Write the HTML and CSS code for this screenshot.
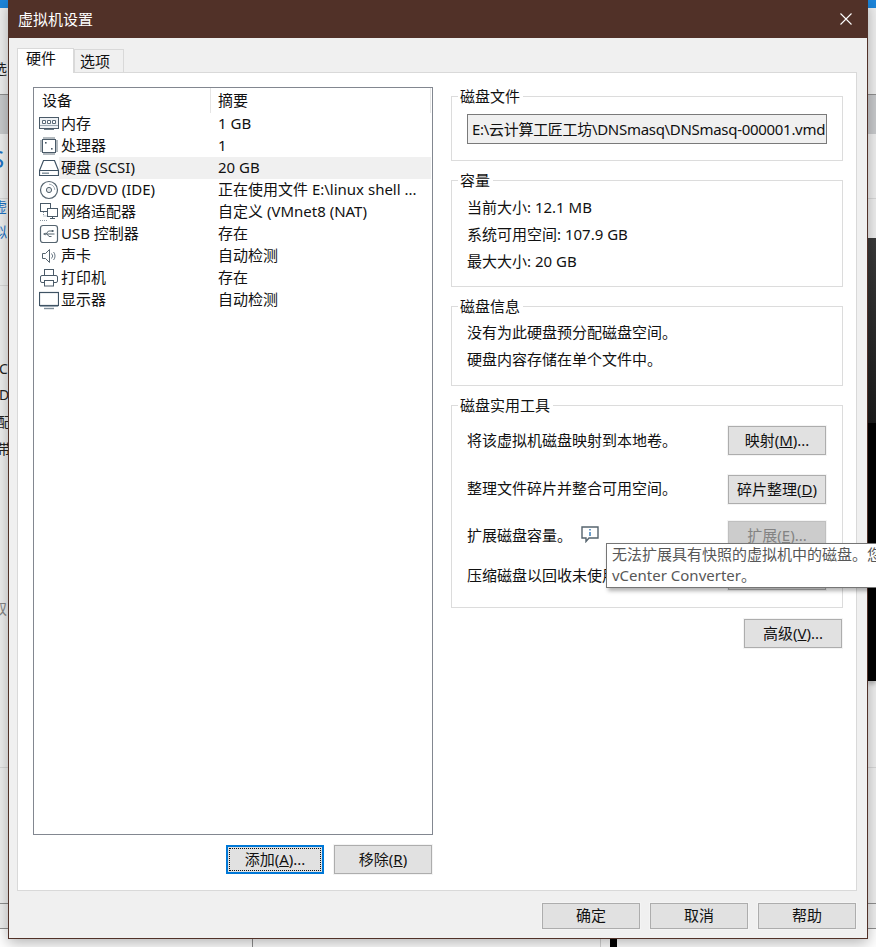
FILE: index.html
```html
<!DOCTYPE html>
<html lang="zh-CN">
<head>
<meta charset="utf-8">
<title>虚拟机设置</title>
<link rel="stylesheet" href="styles.css">
</head>
<body>
<div class="desktop">
  <div class="bg-bar bg-blue"></div>
  <div class="bg-bar bg-gray"></div>
  <div class="bg-dark"></div>
  <div class="bg-black"></div>
  <div class="bg-line l1"></div>
  <div class="bg-line l2"></div>
  <div class="bg-line l3"></div>
  <div class="bg-line l4"></div>
  <div class="bg-line l6"></div>
  <div class="bg-line l5"></div>
  <div class="bg-v v1"></div>
  <div class="bg-v v2"></div>
  <div class="bg-v v3"></div>
  <span class="bg-text t1">选</span>
  <span class="bg-text t2">S</span>
  <span class="bg-text t3">虚</span>
  <span class="bg-text t4">拟</span>
  <span class="bg-text t5">C</span>
  <span class="bg-text t6">D</span>
  <span class="bg-text t7">配</span>
  <span class="bg-text t8">带</span>
  <span class="bg-text t9">双</span>
</div>

<div class="dialog">
  <header class="titlebar">
    <span class="title">虚拟机设置</span>
    <svg class="close" width="12" height="12" viewBox="0 0 12 12"><path d="M0.5 0.5L11.5 11.5M11.5 0.5L0.5 11.5" stroke="#fff" stroke-width="1.1" fill="none"/></svg>
  </header>

  <div class="tabs">
    <div class="tab active">硬件</div>
    <div class="tab">选项</div>
  </div>

  <main class="panel">
    <section class="left">
      <div class="list">
        <div class="list-head">
          <div class="head-cell">设备</div>
          <div class="head-cell second">摘要</div>
        </div>
        <div class="row">
          <svg class="icon" viewBox="0 0 20 20"><rect x="0.5" y="3.5" width="19" height="11" fill="#eef1f4" stroke="#4a5a68"/><path d="M3.5 6.5h3v3h-3zM8.5 6.5h3v3h-3zM13.5 6.5h3v3h-3z" fill="#fff" stroke="#5a6a78"/><path d="M1 11.5h18" stroke="#9aa7b2"/><path d="M5 15.5h10" stroke="#6b7a86"/></svg>
          <div class="name">内存</div><div class="value">1 GB</div>
        </div>
        <div class="row">
          <svg class="icon" viewBox="0 0 20 20"><rect x="3.5" y="3.5" width="13" height="13" fill="#fff" stroke="#4a5a68"/><path d="M5 1v2M7 1v2M9 1v2M11 1v2M13 1v2M15 1v2M5 17v2M7 17v2M9 17v2M11 17v2M13 17v2M15 17v2M1 5h2M1 7h2M1 9h2M1 11h2M1 13h2M1 15h2M17 5h2M17 7h2M17 9h2M17 11h2M17 13h2M17 15h2" stroke="#66757f"/><rect x="6" y="6" width="1.6" height="1.6" fill="#4a5a68"/><rect x="12" y="12" width="1.6" height="1.6" fill="#4a5a68"/></svg>
          <div class="name">处理器</div><div class="value">1</div>
        </div>
        <div class="row selected">
          <svg class="icon" viewBox="0 0 20 20"><path d="M4.5 2.5h11L19.5 12.5v5h-19v-5z" fill="#fff" stroke="#3f5364" stroke-width="1.2"/><path d="M0.5 12.5h19" stroke="#3f5364"/><rect x="3" y="14.5" width="7" height="1.4" fill="#7f8e9a"/></svg>
          <div class="name">硬盘 (SCSI)</div><div class="value">20 GB</div>
        </div>
        <div class="row">
          <svg class="icon" viewBox="0 0 20 20"><circle cx="10" cy="10" r="8.5" fill="#fff" stroke="#55646f" stroke-width="1.2"/><circle cx="10" cy="10" r="2.6" fill="#e3e7ea" stroke="#55646f"/><path d="M10 4.2a5.8 5.8 0 0 1 5.8 5.8" stroke="#a8b3bb" fill="none"/></svg>
          <div class="name">CD/DVD (IDE)</div><div class="value">正在使用文件 E:\linux shell ...</div>
        </div>
        <div class="row">
          <svg class="icon" viewBox="0 0 20 20"><rect x="1.5" y="1.5" width="10" height="8" fill="#fff" stroke="#4a5a68"/><rect x="8.5" y="6.5" width="10" height="8" fill="#fff" stroke="#4a5a68"/><path d="M11 16.5h5M13.5 14.5v2" stroke="#4a5a68"/><path d="M4.5 10v4h4M1 18.5h8" stroke="#8a97a1" stroke-dasharray="1 1" fill="none"/></svg>
          <div class="name">网络适配器</div><div class="value">自定义 (VMnet8 (NAT)</div>
        </div>
        <div class="row">
          <svg class="icon" viewBox="0 0 20 20"><rect x="1.5" y="1.5" width="17" height="17" rx="2.5" fill="#fff" stroke="#55646f" stroke-width="1.2"/><path d="M4.5 10h11M7 10l2.5-3h3M8 10l2 2.5h2.5" stroke="#55646f" fill="none"/><path d="M4.5 10l2-1.5v3z" fill="#55646f"/><rect x="12.5" y="6" width="2" height="2" fill="#55646f"/></svg>
          <div class="name">USB 控制器</div><div class="value">存在</div>
        </div>
        <div class="row">
          <svg class="icon" viewBox="0 0 20 20"><path d="M3.5 7.5h3l4-4v13l-4-4h-3z" fill="#fff" stroke="#55646f"/><path d="M12.5 7.5a3.5 3.5 0 0 1 0 5M14.5 6a6 6 0 0 1 0 8" stroke="#6b7a86" fill="none"/></svg>
          <div class="name">声卡</div><div class="value">自动检测</div>
        </div>
        <div class="row">
          <svg class="icon" viewBox="0 0 20 20"><rect x="5.5" y="1.5" width="9" height="6" fill="#fff" stroke="#4a5a68"/><rect x="1.5" y="7.5" width="17" height="7" rx="1.5" fill="#fff" stroke="#4a5a68"/><rect x="5.5" y="12.5" width="9" height="5.5" fill="#fff" stroke="#4a5a68"/></svg>
          <div class="name">打印机</div><div class="value">存在</div>
        </div>
        <div class="row">
          <svg class="icon" viewBox="0 0 20 20"><rect x="0.5" y="2.5" width="19" height="13" fill="#fff" stroke="#3f5364" stroke-width="1.2"/><path d="M1 16.5h18" stroke="#9aa7b2"/><path d="M5 18.5h10" stroke="#7f8e9a" stroke-width="1.4"/></svg>
          <div class="name">显示器</div><div class="value">自动检测</div>
        </div>
      </div>
      <div class="list-actions">
        <button class="btn default"><span class="focus">添加(<u>A</u>)...</span></button>
        <button class="btn">移除(<u>R</u>)</button>
      </div>
    </section>

    <section class="right">
      <div class="group g-file">
        <div class="legend">磁盘文件</div>
        <div class="file-input">E:\云计算工匠工坊\DNSmasq\DNSmasq-000001.vmd</div>
      </div>
      <div class="group g-cap">
        <div class="legend">容量</div>
        <div class="line">当前大小: 12.1 MB</div>
        <div class="line">系统可用空间: 107.9 GB</div>
        <div class="line">最大大小: 20 GB</div>
      </div>
      <div class="group g-info">
        <div class="legend">磁盘信息</div>
        <div class="line">没有为此硬盘预分配磁盘空间。</div>
        <div class="line">硬盘内容存储在单个文件中。</div>
      </div>
      <div class="group g-tools">
        <div class="legend">磁盘实用工具</div>
        <div class="tools">
          <div class="tool"><span>将该虚拟机磁盘映射到本地卷。</span><button class="btn">映射(<u>M</u>)...</button></div>
          <div class="tool raised"><span>整理文件碎片并整合可用空间。</span><button class="btn">碎片整理(<u>D</u>)</button></div>
          <div class="tool raised"><span class="with-info">扩展磁盘容量。<svg class="info" width="18" height="17" viewBox="0 0 18 17"><path d="M1 1h16v11H8l-3 3.5V12H1z" fill="#fff" stroke="#56646e" stroke-width="1.4"/><path d="M9 3v1.6M9 6v4" stroke="#3d7fb8" stroke-width="1.5"/></svg></span>
            <button class="btn disabled">扩展(<u>E</u>)...</button></div>
          <div class="tool"><span>压缩磁盘以回收未使用的空间。</span><button class="btn">压缩(<u>C</u>)</button></div>
        </div>
      </div>
      <div class="advanced"><button class="btn">高级(<u>V</u>)...</button></div>
    </section>
  </main>

  <footer class="footer">
    <button class="btn">确定</button>
    <button class="btn">取消</button>
    <button class="btn">帮助</button>
  </footer>
</div>

<div class="tooltip">
  <div>无法扩展具有快照的虚拟机中的磁盘。您可以使用 VMware</div>
  <div>vCenter Converter。</div>
</div>
</body>
</html>
```
FILE: styles.css
```css
* { box-sizing: border-box; }
html, body { margin: 0; padding: 0; width: 876px; height: 947px; overflow: hidden; }
body {
  position: relative;
  background: #fff;
  font-family: "Noto Sans", "Noto Sans CJK SC", sans-serif;
  font-size: 15px;
  color: #111;
}
.desktop { position: absolute; inset: 0; overflow: hidden; }
.bg-bar { position: absolute; left: 0; right: 0; }
.bg-blue { top: 0; height: 8px; background: #1c86dc; }
.bg-gray { top: 8px; height: 920px; background: #f0f0f0; }
.bg-dark { position: absolute; right: 0; left: 868px; top: 238px; height: 185px; background: linear-gradient(#3a3a3a, #1c1c1c); z-index: 1; }
.bg-black { position: absolute; right: 0; left: 868px; top: 423px; height: 258px; background: #000; box-shadow: 0 3px 4px rgba(0,0,0,.25); z-index: 1; }
.bg-line { position: absolute; left: 0; right: 0; height: 1px; background: #b9b9b9; }
.l1 { top: 94px; height: 40px; background: #c9cbcd; border-top: 1px solid #8f8f8f; }
.l2 { top: 198px; background: #d9d9d9; }
.l3 { top: 285px; background: #d9d9d9; }
.l4 { top: 767px; background: #d9d9d9; }
.l6 { top: 903px; background: #8f8f8f; }
.l5 { top: 928px; background: #8f8f8f; }
.bg-v { position: absolute; top: 938px; bottom: 0; width: 1px; background: #8f8f8f; }
.v1 { left: 252px; }
.v2 { left: 600px; background: #d5d5d5; }
.v3 { left: 610px; width: 7px; background: #000; }
.bg-text { position: absolute; left: -7px; width: 15px; line-height: 20px; font-size: 14px; color: #222; }
.t1 { top: 59px; }
.t2 { top: 146px; left: -9px; font-size: 24px; line-height: 26px; color: #1e72c4; }
.t3 { top: 197px; color: #1e72c4; }
.t4 { top: 222px; color: #1e72c4; }
.t5 { top: 359px; left: -1px; }
.t6 { top: 385px; left: -1px; }
.t7 { top: 412px; left: -3px; }
.t8 { top: 439px; left: -3px; }
.t9 { top: 599px; color: #888; }

.dialog {
  position: absolute;
  left: 8px;
  top: 0;
  width: 860px;
  height: 939px;
  display: flex;
  flex-direction: column;
  background: #f0f0f0;
  border: 1px solid #513128;
  border-top: 0;
  box-shadow: 0 4px 14px rgba(0,0,0,.3);
  z-index: 2;
}
.titlebar {
  flex: none;
  height: 38px;
  background: #513128;
  color: #fff;
  display: flex;
  align-items: center;
  justify-content: space-between;
  padding: 0 15px 1px 9px;
}
.tabs { flex: none; display: flex; align-items: flex-end; height: 34px; padding-left: 8px; }
.tab {
  width: 50px;
  height: 23px;
  line-height: 22px;
  padding-left: 5px;
  background: #f0f0f0;
  border: 1px solid #d9d9d9;
  border-bottom: 0;
}
.tab.active {
  width: 57px;
  height: 25px;
  line-height: 19px;
  padding-left: 8px;
  background: #fff;
  margin-bottom: -1px;
  position: relative;
  z-index: 1;
}
.panel {
  flex: none;
  width: 840px;
  height: 819px;
  margin-left: 8px;
  background: #fff;
  border: 1px solid #d9d9d9;
  padding: 14px 13px 0 15px;
  display: flex;
  justify-content: space-between;
}
.left { width: 400px; }
.list {
  height: 748px;
  border: 1px solid #828790;
  background: #fff;
}
.list-head { display: grid; grid-template-columns: 177px 1fr; height: 25px; line-height: 25px; }
.head-cell { padding-left: 8px; border-right: 1px solid #e5e5e5; }
.head-cell.second { padding-left: 7px; margin-right: 1px; }
.row {
  display: grid;
  grid-template-columns: 25px 152px 1fr;
  height: 22px;
  line-height: 20px;
  margin-right: 1px;
  white-space: nowrap;
}
.icon { width: 20px; height: 20px; margin: 1px 0 0 5px; }
.name { padding-left: 2px; }
.value { padding-left: 7px; overflow: hidden; }
.row.selected .name, .row.selected .value { background: #f0f0f0; }
.list-actions { display: flex; justify-content: flex-end; gap: 10px; margin-top: 10px; padding-right: 1px; }

.btn {
  width: 98px;
  height: 29px;
  padding: 0 0 2px;
  background: #e1e1e1;
  border: 1px solid #adadad;
  font: inherit;
  line-height: 24px;
  color: #111;
  outline: 1px solid #f4f4f4;
  white-space: nowrap;
}
.btn.default { border: 2px solid #0078d7; padding: 1px; outline: 0; }
.focus { display: flex; align-items: center; justify-content: center; height: 100%; border: 1px dotted #111; padding-bottom: 2px; }
.btn.disabled { background: #ccc; border-color: #bfbfbf; color: #838383; }

.right { width: 392px; padding-top: 9px; }
.group { border: 1px solid #dcdcdc; padding: 0 0 0 15px; margin-bottom: 19px; }
.legend {
  width: fit-content;
  height: 20px;
  line-height: 20px;
  margin: -11px 0 0 -9px;
  padding: 0 3px 0 2px;
  background: #fff;
}
.g-file { height: 65px; }
.g-cap { height: 107px; }
.g-info { height: 80px; }
.g-tools { height: 203px; margin-bottom: 11px; }
.file-input {
  width: 360px;
  height: 30px;
  margin-top: 8px;
  line-height: 28px;
  padding-left: 4px;
  background: #f0f0f0;
  border: 1px solid #7a7a7a;
  letter-spacing: -0.3px;
  white-space: nowrap;
  overflow: hidden;
}
.line { height: 27px; line-height: 27px; white-space: nowrap; }
.legend + .line { margin-top: 3px; }
.g-cap .legend + .line { margin-top: 4px; }
.tools {
  display: grid;
  grid-template-rows: 49px 46px 40px 29px;
  margin-top: 11px;
  padding-right: 16px;
}
.tool { display: flex; justify-content: space-between; align-items: flex-start; line-height: 28px; white-space: nowrap; }
.tool.raised { line-height: 26px; }
.with-info { display: flex; align-items: center; height: 27px; }
.info { margin-left: 9px; }
.advanced { display: flex; justify-content: flex-end; padding-right: 1px; }

.footer { flex: 1; display: flex; justify-content: flex-end; gap: 10px; padding: 12px 11px 0 0; }
.footer .btn { height: 26px; line-height: 22px; }

.tooltip {
  position: absolute;
  left: 606px;
  top: 543px;
  width: 300px;
  height: 45px;
  padding: 0 0 0 5px;
  background: #fff;
  border: 1px solid #767676;
  color: #575757;
  line-height: 21px;
  white-space: nowrap;
  overflow: hidden;
  box-shadow: 2px 3px 4px rgba(0,0,0,.3);
  z-index: 3;
}
```
